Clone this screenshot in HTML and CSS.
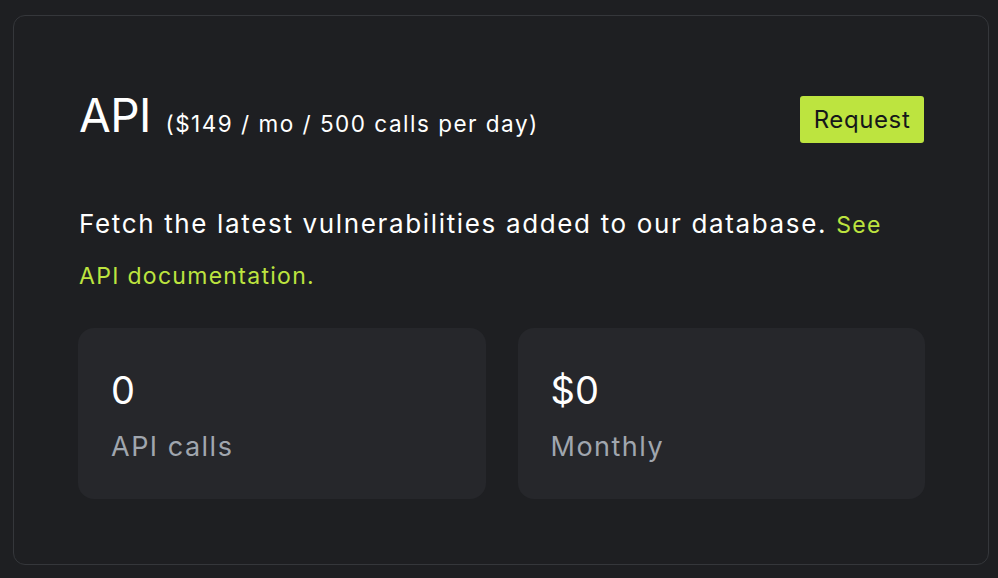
FILE: index.html
```html
<!DOCTYPE html>
<html lang="en">
<head>
<meta charset="utf-8">
<title>API</title>
<link rel="stylesheet" href="styles.css">
</head>
<body>
<div class="page">
  <section class="panel">
    <header class="panel-head">
      <h2 class="title">API <span class="price">($149 / mo / 500 calls per day)</span></h2>
      <button class="request">Request</button>
    </header>
    <p class="desc">Fetch the latest vulnerabilities added to our database. <a class="link" href="#">See API documentation.</a></p>
    <div class="stats">
      <div class="stat">
        <div class="stat-value">0</div>
        <div class="stat-label">API calls</div>
      </div>
      <div class="stat">
        <div class="stat-value">$0</div>
        <div class="stat-label">Monthly</div>
      </div>
    </div>
  </section>
</div>
</body>
</html>
```
FILE: styles.css
```css
html, body {
  margin: 0;
  padding: 0;
  background: #1e1f22;
}
body {
  font-family: Inter, "Noto Sans", sans-serif;
  color: #ffffff;
}
.page {
  padding: 15px 9px 13px 13px;
}
.panel {
  border: 1px solid #35373b;
  border-radius: 12px;
  background: #1e1f22;
  padding: 80px 64px 64px 65px;
  height: 550px;
  box-sizing: border-box;
}
.panel-head {
  display: flex;
  justify-content: space-between;
  align-items: center;
  height: 47px;
}
.title {
  margin: 0;
  font-size: 46px;
  font-weight: 400;
  letter-spacing: -0.5px;
  line-height: 56px;
}
.price {
  font-size: 22.5px;
  letter-spacing: 1.5px;
  margin-left: 2px;
}
.request {
  font-family: Inter, "Noto Sans", sans-serif;
  background: #bde43f;
  color: #15171a;
  border: none;
  border-radius: 3px;
  font-size: 24px;
  letter-spacing: 0.6px;
  padding: 0;
  height: 47px;
  width: 124px;
}
.desc {
  margin: 56px 0 0;
  font-size: 26px;
  line-height: 50px;
  letter-spacing: 1.65px;
}
.link {
  color: #bde43f;
  font-size: 23px;
  letter-spacing: 1.3px;
  text-decoration: none;
}
.stats {
  display: grid;
  grid-template-columns: 1fr 1fr;
  gap: 32px;
  margin: 27px -1px 0;
}
.stat {
  background: #26272b;
  border-radius: 16px;
  height: 171px;
  padding: 40px 32px 0 33px;
  box-sizing: border-box;
}
.stat-value {
  font-size: 38px;
  line-height: 44px;
}
.stat-label {
  margin-top: 18px;
  font-size: 27px;
  line-height: 34px;
  letter-spacing: 1.5px;
  color: #a0a6ae;
}
```
